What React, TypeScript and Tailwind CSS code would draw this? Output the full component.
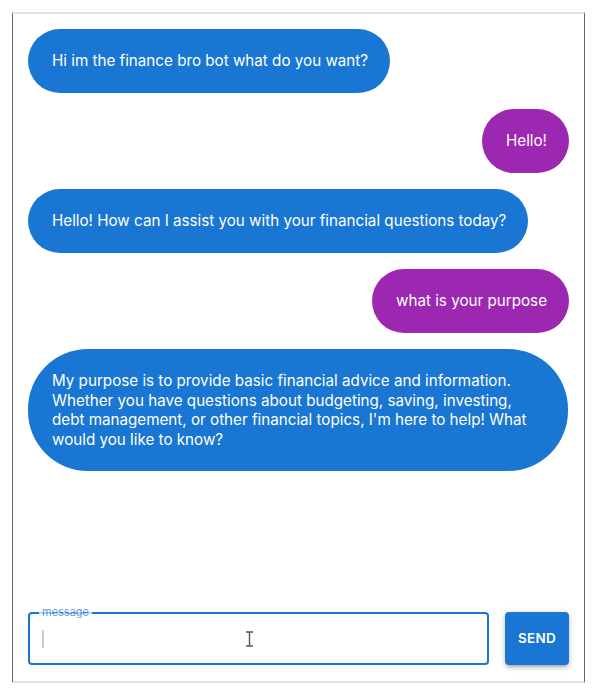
const messages = [
  { from: 'bot', text: 'Hi im the finance bro bot what do you want?' },
  { from: 'user', text: 'Hello!' },
  { from: 'bot', text: 'Hello! How can I assist you with your financial questions today?' },
  { from: 'user', text: 'what is your purpose' },
  {
    from: 'bot',
    long: true,
    text: "My purpose is to provide basic financial advice and information. Whether you have questions about budgeting, saving, investing, debt management, or other financial topics, I'm here to help! What would you like to know?",
  },
];

export default function App() {
  return (
    <div className="w-[597px] h-[695px] bg-white pt-3 pl-3" style={{ fontFamily: 'Inter, "Liberation Sans", sans-serif' }}>
      <div className="w-[573px] h-[671px] flex flex-col border-l border-r border-l-[#666] border-r-[#666] border-t-2 border-b-2 border-t-[#e3e3e3] border-b-[#e3e3e3]">
        <div className="flex-1 flex flex-col gap-[16.5px] pt-[15px] px-[15px]">
          {messages.map((m, i) =>
            m.from === 'bot' ? (
              <div key={i} className="flex justify-start">
                <div
                  className={
                    m.long
                      ? 'w-[540px] bg-[#1976d2] text-white text-[15.2px] leading-[19.5px] pl-6 pr-[36px] py-[22px] rounded-[60px]'
                      : 'max-w-[540px] bg-[#1976d2] text-white text-[15.2px] leading-[19.5px] pl-6 pr-[22px] py-[22px] rounded-[60px]'
                  }
                >
                  {m.text}
                </div>
              </div>
            ) : (
              <div key={i} className="flex justify-end">
                <div className="bg-[#9c27b0] text-white text-[15.2px] leading-[19.5px] pl-6 pr-[22px] py-[22px] rounded-[60px]">
                  {m.text}
                </div>
              </div>
            ),
          )}
        </div>
        <div className="flex items-stretch gap-4 px-[15px] pb-4">
          <div className="relative flex-1 h-[53px] border-2 border-[#1976d2] rounded flex items-center pl-[12px]">
            <span className="absolute -top-[9px] left-[9px] bg-white px-[3px] text-[11px] leading-[14px] text-[#1976d2] opacity-70">
              message
            </span>
            <span className="w-[2px] h-[18px] bg-[#ccc]" />
            <svg className="absolute left-[215px] top-[17px]" width="9" height="16" viewBox="0 0 9 16">
              <path d="M1 1h7M1 15h7M4.5 1v14" stroke="#555" strokeWidth="1.4" fill="none" />
            </svg>
          </div>
          <button className="w-[64px] h-[53px] bg-[#1976d2] text-white text-[13.5px] font-semibold tracking-[0.2px] rounded shadow-[0_3px_3px_-2px_rgba(0,0,0,0.2),0_3px_4px_0_rgba(0,0,0,0.14),0_1px_8px_0_rgba(0,0,0,0.12)]">
            SEND
          </button>
        </div>
      </div>
    </div>
  );
}
